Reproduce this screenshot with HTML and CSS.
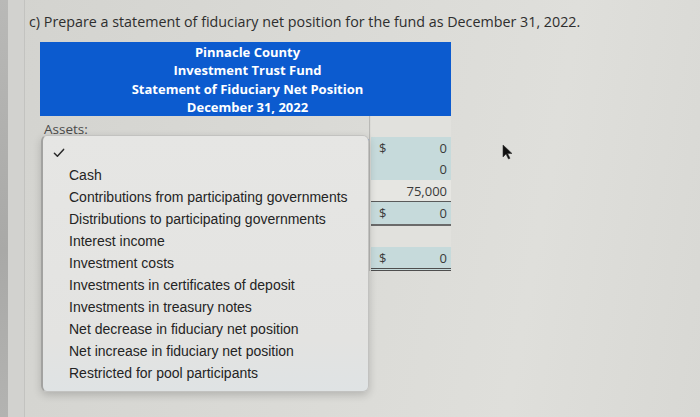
FILE: index.html
```html
<!DOCTYPE html>
<html lang="en">
<head>
<meta charset="utf-8">
<title>Statement of Fiduciary Net Position</title>
<link rel="stylesheet" href="styles.css">
</head>
<body>
<div class="screen">
  <div class="strip"><div class="strip-dark"></div><div class="strip-light"></div></div>
  <main class="content">
    <p class="prompt">c) Prepare a statement of fiduciary net position for the fund as December 31, 2022.</p>
    <div class="statement">
      <div class="head">
        <div>Pinnacle County</div>
        <div>Investment Trust Fund</div>
        <div>Statement of Fiduciary Net Position</div>
        <div>December 31, 2022</div>
      </div>
      <div class="rows">
        <div class="label">Assets:</div><div class="val blank"></div>
        <div class="label"></div><div class="val fill"><span>$</span><span>0</span></div>
        <div class="label"></div><div class="val fill"><span></span><span>0</span></div>
        <div class="label"></div><div class="val plain under"><span></span><span>75,000</span></div>
        <div class="label"></div><div class="val fill total"><span>$</span><span>0</span></div>
        <div class="label"></div><div class="val blank"></div>
        <div class="label"></div><div class="val fill grand"><span>$</span><span>0</span></div>
      </div>
      <div class="focus-edge"></div>
      <ul class="menu">
        <li class="check"><svg width="12" height="10" viewBox="0 0 12 10"><path d="M1.4 5.2 L4.4 8.2 L10.6 1.4" fill="none" stroke="#2a2a2a" stroke-width="1.5" stroke-linecap="round" stroke-linejoin="round"/></svg></li>
        <li>Cash</li>
        <li>Contributions from participating governments</li>
        <li>Distributions to participating governments</li>
        <li>Interest income</li>
        <li>Investment costs</li>
        <li>Investments in certificates of deposit</li>
        <li>Investments in treasury notes</li>
        <li>Net decrease in fiduciary net position</li>
        <li>Net increase in fiduciary net position</li>
        <li>Restricted for pool participants</li>
      </ul>
    </div>
  </main>
  <svg class="cursor" width="12" height="16" viewBox="0 0 12 16"><path d="M1 1 L1 13 L4 10 L6.5 15 L8 14.3 L5.6 9.5 L10 9.5 Z" fill="#111" stroke="#333" stroke-width="0.6"/></svg>
</div>
</body>
</html>
```

FILE: styles.css
```css
* { box-sizing: border-box; }
html, body { margin: 0; padding: 0; }
body {
  width: 700px;
  height: 417px;
  overflow: hidden;
  background: linear-gradient(100deg, #d3d3cf 0%, #dadad6 45%, #dfdfdb 75%, #d8d8d4 100%);
  font-family: "Open Sans", "Liberation Sans", sans-serif;
}
.screen {
  position: relative;
  display: flex;
  height: 417px;
}
.strip {
  display: flex;
  width: 25px;
  flex: none;
  border-right: 1px solid #c3c3c0;
}
.strip-dark { width: 8px; background: linear-gradient(180deg, #b9b9b7, #a9a9a7 60%, #b3b3b1); }
.strip-light { flex: 1; background: #d2d2cf; }
.content {
  flex: 1;
  padding: 13px 0 0 4px;
}
.prompt {
  margin: 0 0 11px 0;
  font-size: 14.3px;
  line-height: 18px;
  color: #2e2e2e;
}
.statement {
  position: relative;
  width: 411px;
  margin-left: 11px;
}
.head {
  background: #0c5bcf;
  color: #fff;
  font-weight: 700;
  font-size: 13px;
  line-height: 18.3px;
  text-align: center;
  padding: 1px 0 0 4px;
}
.rows {
  display: grid;
  grid-template-columns: 330px 81px;
  grid-template-rows: 21px 21px 22px 22px 24px 21px 24px;
  border-right: 1px solid #b9b9b6;
}
.label {
  border-right: 1px solid #b9b9b6;
  font-size: 13.5px;
  color: #4a4a4a;
  padding: 4px 0 0 4px;
  line-height: 18px;
}
.val {
  display: flex;
  justify-content: space-between;
  align-items: center;
  padding: 0 4px 0 8px;
  font-size: 13px;
  color: #3a3a3a;
  margin-left: 1px;
}
.fill { background: #c6dadb; }
.plain { background: #e6e6e2; }
.blank { background: #e1e1dd; }
.under { border-bottom: 1px solid #5a5a5a; }
.total { border-bottom: 2px solid #6a6a6a; }
.grand { border-bottom: 3px double #4e4e4e; }
.focus-edge {
  position: absolute;
  left: 324px;
  top: 97px;
  width: 5px;
  height: 17px;
  border: 2px solid #4f7fcc;
  border-left: none;
}
.menu {
  position: absolute;
  left: 1px;
  top: 93px;
  width: 328px;
  height: 257px;
  margin: 0;
  padding: 6px 0 8px 0;
  list-style: none;
  background: linear-gradient(180deg, #e6e6e4 0%, #e3e3e1 80%, #dfe3e4 100%);
  border: 1px solid #c2c2c0;
  border-left: 2px solid #a2a2a0;
  border-radius: 6px;
  box-shadow: 0 3px 8px rgba(0,0,0,0.18);
  font-family: "Liberation Sans", Arial, sans-serif;
  font-size: 14px;
  color: #242424;
}
.menu li {
  height: 22px;
  line-height: 22px;
  padding-left: 26px;
  white-space: nowrap;
}
.menu li.check {
  display: flex;
  align-items: center;
  padding-left: 10px;
}
.cursor {
  position: absolute;
  left: 502px;
  top: 144px;
}
```
